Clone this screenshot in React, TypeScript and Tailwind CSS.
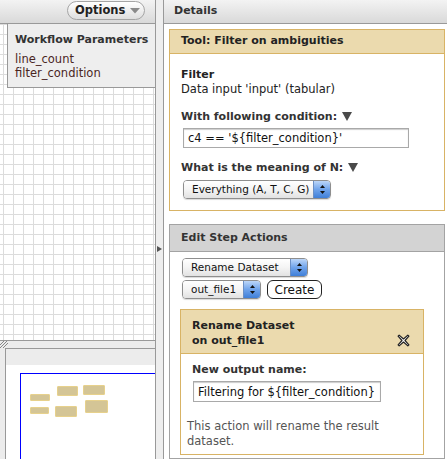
import React from 'react';

const font = "font-['DejaVu_Sans',sans-serif]";

const DownTri = () => (
  <svg width="10" height="9" viewBox="0 0 10 9" className="inline-block ml-[5px] -mt-[2px] align-middle">
    <path d="M0 0 L10 0 L5 9 Z" fill="#4a4a4a" />
  </svg>
);

// Aqua-style popup select
const MacSelect = ({ label, width }: { label: string; width: string }) => (
  <div className={`flex h-[19px] ${width} rounded-[4px] border border-[#8e8e8e] overflow-hidden shadow-[0_1px_1px_rgba(0,0,0,0.15)]`}>
    <div className="flex-1 flex items-center pl-[8px] bg-gradient-to-b from-white via-[#f4f4f4] to-[#e2e2e2] text-[10.5px] text-[#111] whitespace-nowrap">
      {label}
    </div>
    <div className="w-[17px] flex items-center justify-center border-l border-[#6b8fc4] bg-gradient-to-b from-[#bcd6f8] via-[#6fa3ea] to-[#3f7fd8]">
      <svg width="7" height="11" viewBox="0 0 7 11">
        <path d="M3.5 1 L6 4 L1 4 Z" fill="#111" />
        <path d="M3.5 10 L6 7 L1 7 Z" fill="#111" />
      </svg>
    </div>
  </div>
);

const CloseIcon = () => (
  <svg width="13" height="13" viewBox="0 0 12 12">
    <path
      d="M2 1 L6 4.6 L10 1 L11 2 L7.4 6 L11 10 L10 11 L6 7.4 L2 11 L1 10 L4.6 6 L1 2 Z"
      fill="#fff"
      stroke="#222"
      strokeWidth="1.1"
      strokeLinejoin="round"
    />
  </svg>
);

const nodes = [
  { l: 9, t: 20, w: 20, h: 7 },
  { l: 36, t: 12, w: 21, h: 10 },
  { l: 62, t: 11, w: 22, h: 10 },
  { l: 9, t: 33, w: 19, h: 7 },
  { l: 34, t: 32, w: 22, h: 11 },
  { l: 64, t: 26, w: 23, h: 13 },
];

const App = () => {
  return (
    <div className={`w-[447px] h-[459px] flex overflow-hidden bg-white text-[#222] ${font}`}>
      {/* Left: workflow canvas */}
      <div className="w-[155px] flex flex-col">
        <div className="h-[24px] shrink-0 flex justify-end pt-[1px] pr-[10px] border-b border-[#999] bg-gradient-to-b from-[#f3f3f3] to-[#d9d9d9]">
          <div className="h-[19px] w-[78px] flex items-center rounded-full border border-[#a5a5a5] bg-gradient-to-b from-white to-[#dedede] pl-[7px]">
            <span className="text-[11.5px] font-bold text-[#222]">Options</span>
            <svg width="10" height="6" viewBox="0 0 10 6" className="ml-[5px]">
              <path d="M0 0 L10 0 L5 5.5 Z" fill="#8a8a8a" />
            </svg>
          </div>
        </div>

        <div className="flex-1 relative bg-white bg-[linear-gradient(to_right,#dcdcdc_1px,transparent_1px),linear-gradient(to_bottom,#dcdcdc_1px,transparent_1px)] bg-[size:10px_10px] bg-[position:3px_0px]">
          <div className="absolute left-[7px] top-0 right-0 h-[64px] border-l border-b border-[#999] bg-[#eeeeee] pl-[7px] pt-[8px]">
            <div className="text-[11px] font-bold leading-[15px] text-[#333]">Workflow Parameters</div>
            <div className="mt-[5px] text-[11.5px] leading-[14px] text-[#4a261f]">line_count</div>
            <div className="text-[11.5px] leading-[14px] text-[#4a261f]">filter_condition</div>
          </div>
        </div>

        <div className="h-[119px] shrink-0 relative border-t border-[#999] bg-[#ececec] pl-[5px] pt-[7px]">
          <svg width="8" height="7" viewBox="0 0 8 7" className="absolute left-0 top-0">
            <path d="M0 4 L4 0 M0 7 L7 0 M3 7 L8 2" stroke="#888" strokeWidth="1" />
          </svg>
          <div className="h-full border-l border-t border-[#999] bg-white flex flex-col">
            <div className="h-[16px] bg-[#ececec]" />
            <div className="flex-1 pl-[14px] pt-[8px]">
              <div className="relative h-full border-l border-t border-[#0000ff]">
                {nodes.map((n, i) => (
                  <div
                    key={i}
                    className="absolute bg-[#d4c596] border border-[#e7d18c] rounded-[1px]"
                    style={{ left: n.l, top: n.t, width: n.w, height: n.h }}
                  />
                ))}
              </div>
            </div>
          </div>
        </div>
      </div>

      {/* Splitter */}
      <div className="w-[9px] border-l border-r border-[#999] bg-[#eeeeee] pt-[246px]">
        <svg width="5" height="6" viewBox="0 0 5 6" className="ml-[1px]">
          <path d="M0 0 L5 3 L0 6 Z" fill="#555" />
        </svg>
      </div>

      {/* Right: details */}
      <div className="flex-1 flex flex-col">
        <div className="h-[24px] shrink-0 flex items-center pl-[10px] border-b border-[#999] bg-gradient-to-b from-[#f3f3f3] to-[#d9d9d9]">
          <span className="text-[11px] font-bold text-[#333]">Details</span>
        </div>

        <div className="flex-1 min-h-0 flex flex-col pl-[5px] pr-[2px] pt-[5px]">
          {/* Tool form */}
          <div className="shrink-0 border border-[#d8b365]">
            <div className="h-[24px] flex items-center px-[11px] border-b border-[#d8b365] bg-[#ebdaae]">
              <span className="text-[11px] font-bold text-[#222]">Tool: Filter on ambiguities</span>
            </div>
            <div className="px-[11px] pt-[13px] pb-[11px]">
              <div className="text-[11px] font-bold leading-[15px]">Filter</div>
              <div className="text-[11.5px] leading-[15px]">Data input 'input' (tabular)</div>
              <div className="mt-[12px] text-[11px] font-bold leading-[15px] text-[#333]">
                With following condition:
                <DownTri />
              </div>
              <input
                readOnly
                value="c4 == '${filter_condition}'"
                className="mt-[4px] ml-[2px] block w-[226px] h-[20px] px-[4px] border border-[#a9a9a9] shadow-[inset_0_1px_1px_rgba(0,0,0,0.2)] text-[11.5px] text-[#111] outline-none"
              />
              <div className="mt-[12px] text-[11px] font-bold leading-[15px] text-[#333]">
                What is the meaning of N:
                <DownTri />
              </div>
              <div className="mt-[5px] ml-[2px]">
                <MacSelect label="Everything (A, T, C, G)" width="w-[148px]" />
              </div>
            </div>
          </div>

          {/* Edit step actions */}
          <div className="mt-[13px] flex-1 border border-[#a3a3a3]">
            <div className="h-[27px] flex items-center px-[11px] border-b border-[#a3a3a3] bg-[#d3d3d3]">
              <span className="text-[11px] font-bold text-[#333]">Edit Step Actions</span>
            </div>
            <div className="pl-[10px] pt-[6px]">
              <div className="ml-[2px]">
                <MacSelect label="Rename Dataset" width="w-[126px]" />
              </div>
              <div className="mt-[3px] ml-[2px] flex items-center">
                <MacSelect label="out_file1" width="w-[79px]" />
                <div className="ml-[6px] h-[19px] w-[55px] flex items-center justify-center rounded-[6px] border border-[#222] bg-white text-[12px] text-[#111]">
                  Create
                </div>
              </div>

              <div className="mt-[10px] w-[244px] border border-[#d8b365]">
                <div className="h-[44px] flex items-end justify-between pl-[11px] pr-[13px] pb-[5px] border-b border-[#d8b365] bg-[#ebdaae]">
                  <div className="text-[11px] font-bold leading-[15px] text-[#222]">
                    <div>Rename Dataset</div>
                    <div>on out_file1</div>
                  </div>
                  <div className="mb-[1px]">
                    <CloseIcon />
                  </div>
                </div>
                <div className="pt-[8px] pb-[5px]">
                  <div className="pl-[11px] text-[11px] font-bold leading-[15px] text-[#333]">New output name:</div>
                  <input
                    readOnly
                    value="Filtering for ${filter_condition}"
                    className="mt-[4px] ml-[12px] block w-[188px] h-[21px] px-[4px] border border-[#a9a9a9] shadow-[inset_0_1px_1px_rgba(0,0,0,0.2)] text-[11.5px] text-[#111] outline-none"
                  />
                  <div className="mt-[17px] px-[6px] text-[11.5px] leading-[15px] text-[#555]">
                    This action will rename the result dataset.
                  </div>
                </div>
              </div>
            </div>
          </div>
        </div>
      </div>
    </div>
  );
};

export default App;
